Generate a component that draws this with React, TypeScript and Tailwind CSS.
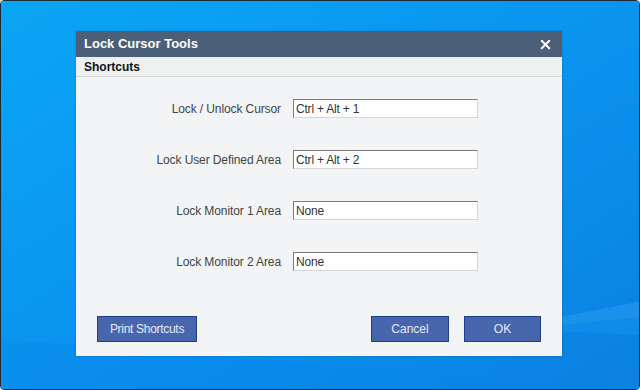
import { X } from 'lucide-react';

const shortcuts = [
  { label: 'Lock / Unlock Cursor', value: 'Ctrl + Alt + 1' },
  { label: 'Lock User Defined Area', value: 'Ctrl + Alt + 2' },
  { label: 'Lock Monitor 1 Area', value: 'None' },
  { label: 'Lock Monitor 2 Area', value: 'None' },
];

function Wallpaper() {
  return (
    <svg className="absolute inset-0 h-full w-full" viewBox="0 0 640 390" preserveAspectRatio="none">
      <defs>
        <linearGradient id="bg" x1="0" y1="0" x2="1" y2="1">
          <stop offset="0" stopColor="#0aa6f4" />
          <stop offset="0.55" stopColor="#0a92ef" />
          <stop offset="1" stopColor="#0a80e2" />
        </linearGradient>
      </defs>
      <rect width="640" height="390" fill="url(#bg)" />
      <polygon points="560,318 640,302 640,318 560,326" fill="#3aaaf4" opacity="0.35" />
      <polygon points="560,326 640,318 640,336 560,332" fill="#1f9cf2" opacity="0.3" />
      <polygon points="0,340 640,390 0,390" fill="#0a86e8" opacity="0.3" />
    </svg>
  );
}

export default function App() {
  return (
    <div className="relative w-[640px] h-[390px] overflow-hidden rounded-[4px] border border-[#1c2b3a] font-['Liberation_Sans',Arial,sans-serif]">
      <Wallpaper />
      <div className="relative pt-[30px] pl-[75px]">
        <div className="w-[486px] h-[325px] flex flex-col bg-[#f2f4f5] shadow-[0_0_2px_rgba(0,0,0,0.25)]">
          <div className="h-[26px] flex items-center justify-between bg-[#4b5f79] pl-[8px] pr-[9px]">
            <span className="text-[13px] font-bold text-white">Lock Cursor Tools</span>
            <X className="w-[15px] h-[15px] text-white" strokeWidth={3.2} />
          </div>
          <div className="h-[20px] flex items-center bg-[#eff1f1] border-t border-[#f6e9e6] border-b border-b-[#d6dada] pl-[8px]">
            <span className="text-[12px] font-bold text-[#111]">Shortcuts</span>
          </div>
          <div className="flex flex-col gap-[32px] pt-[22px]">
            {shortcuts.map((s) => (
              <div key={s.label} className="flex items-center gap-[12px]">
                <span className="w-[205px] text-right text-[12px] text-[#444] tracking-[-0.1px]">{s.label}</span>
                <div className="w-[185px] h-[19px] flex items-center bg-white border border-[#d3d5d6] border-t-[#7a7a7a] border-l-[#7a7a7a] pl-[2px] text-[12px] text-[#333] tracking-[-0.2px]">
                  {s.value}
                </div>
              </div>
            ))}
          </div>
          <div className="mt-auto flex items-center px-[21px] pb-[14px]">
            <button className="w-[100px] h-[26px] bg-[#4766ae] border border-[#1f3f8a] text-[12px] text-[#e6ecf7] tracking-[-0.3px]">
              Print Shortcuts
            </button>
            <div className="ml-auto flex gap-[15px]">
              <button className="w-[78px] h-[26px] bg-[#4766ae] border border-[#1f3f8a] text-[12px] text-[#e6ecf7]">
                Cancel
              </button>
              <button className="w-[77px] h-[26px] bg-[#4766ae] border border-[#1f3f8a] text-[12px] text-[#e6ecf7]">
                OK
              </button>
            </div>
          </div>
        </div>
      </div>
    </div>
  );
}
